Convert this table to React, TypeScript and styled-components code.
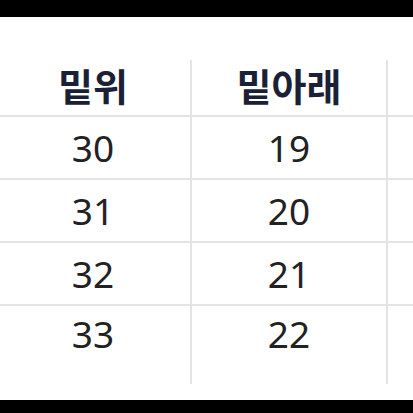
import styled, { createGlobalStyle } from 'styled-components'

const GlobalStyle = createGlobalStyle`
  html, body {
    margin: 0;
    padding: 0;
    background: #000;
  }
`

const Screen = styled.div`
  width: 413px;
  height: 413px;
  background: #000;
  padding-top: 17px;
  box-sizing: border-box;
  overflow: hidden;
`

const Sheet = styled.div`
  width: 413px;
  height: 383px;
  background: #fff;
  padding-top: 43px;
  box-sizing: border-box;
  overflow: hidden;
`

const Table = styled.div`
  display: flex;
  flex-direction: column;
  margin-left: -4px;
  width: 420px;
`

const Row = styled.div<{ $height: number; $line?: boolean }>`
  display: grid;
  grid-template-columns: 196px 196px 28px;
  height: ${p => p.$height}px;
  border-bottom: ${p => (p.$line ? '2px solid #e4e4e4' : 'none')};
  box-sizing: border-box;
`

const Cell = styled.div<{ $head?: boolean; $top?: boolean }>`
  display: flex;
  justify-content: center;
  align-items: ${p => (p.$top ? 'flex-start' : 'center')};
  padding-top: ${p => (p.$top ? '9px' : '0')};
  padding-bottom: ${p => (p.$head ? '5px' : '0')};
  border-right: 2px solid #e4e4e4;
  box-sizing: border-box;
  font-family: ${p => (p.$head ? '"Noto Sans CJK KR", "Noto Sans", sans-serif' : '"Noto Sans", sans-serif')};
  font-weight: ${p => (p.$head ? 700 : 400)};
  font-size: ${p => (p.$head ? '38px' : '37px')};
  color: ${p => (p.$head ? '#1a2136' : '#222')};
  line-height: 1;
`

const Spare = styled.div``

const rows = [
  ['30', '19'],
  ['31', '20'],
  ['32', '21'],
  ['33', '22'],
]

export default function App() {
  return (
    <>
      <GlobalStyle />
      <Screen>
        <Sheet>
          <Table>
            <Row $height={57} $line>
              <Cell $head>밑위</Cell>
              <Cell $head>밑아래</Cell>
              <Spare />
            </Row>
            {rows.map((r, i) => {
              const last = i === rows.length - 1
              return (
                <Row key={i} $height={last ? 78 : 63} $line={!last}>
                  <Cell $top={last}>{r[0]}</Cell>
                  <Cell $top={last}>{r[1]}</Cell>
                  <Spare />
                </Row>
              )
            })}
          </Table>
        </Sheet>
      </Screen>
    </>
  )
}
